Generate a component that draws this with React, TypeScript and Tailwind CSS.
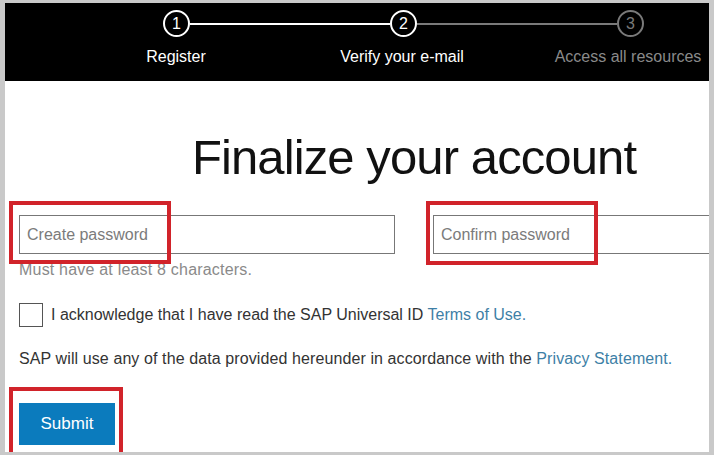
import React from "react";

const steps = [
  { n: "1", label: "Register", active: true },
  { n: "2", label: "Verify your e-mail", active: true },
  { n: "3", label: "Access all resources", active: false },
];

const Circle = ({ n, active }: { n: string; active: boolean }) => (
  <div
    className={`w-[27px] h-[27px] rounded-full border-2 flex items-center justify-center text-[16px] leading-none ${
      active ? "border-white text-white" : "border-[#7a7a7a] text-[#7a7a7a]"
    }`}
  >
    {n}
  </div>
);

export default function App() {
  return (
    <div
      className="w-[714px] h-[455px] bg-[#c9c9c9] pt-[3px] pb-[3px] pl-[5px] pr-[5px]"
      style={{ fontFamily: '"Liberation Sans", Arial, sans-serif' }}
    >
      <div className="w-full h-full bg-white flex flex-col overflow-hidden">
        {/* stepper */}
        <div className="h-[78px] shrink-0 bg-black pt-[7px]">
          <div className="flex items-center ml-[158px]">
            <Circle n="1" active />
            <div className="w-[200px] h-[2px] bg-white" />
            <Circle n="2" active />
            <div className="w-[200px] h-[2px] bg-[#7a7a7a]" />
            <Circle n="3" active={false} />
          </div>
          <div className="grid grid-cols-[226px_226px_226px] ml-[58px] mt-[10px]">
            {steps.map((s, i) => (
              <div
                key={i}
                className={`text-center text-[16px] leading-[20px] whitespace-nowrap ${
                  s.active ? "text-white" : "text-[#8a8a8a]"
                }`}
              >
                {s.label}
              </div>
            ))}
          </div>
        </div>

        <h1 className="mt-[52px] ml-[187px] h-[49px] text-[49px] leading-none tracking-[-0.9px] text-[#111] whitespace-nowrap">
          Finalize your account
        </h1>

        <div className="flex mt-[33px] ml-[14px] gap-[38px]">
          <div className="relative shrink-0">
            <div className="w-[376px] h-[39px] border border-[#777] flex items-center px-[7px] text-[16px] text-[#7b7b7b]">
              Create password
            </div>
            <div className="absolute left-[-10px] top-[-14px] w-[162px] h-[63px] border-4 border-[#d1232a]" />
          </div>
          <div className="relative shrink-0">
            <div className="w-[320px] h-[39px] border border-[#777] flex items-center px-[7px] text-[16px] text-[#7b7b7b]">
              Confirm password
            </div>
            <div className="absolute left-[-7px] top-[-14px] w-[172px] h-[64px] border-4 border-[#d1232a]" />
          </div>
        </div>

        <div className="ml-[14px] mt-[6px] text-[16px] leading-[20px] tracking-[0.2px] text-[#8a8a8a]">
          Must have at least 8 characters.
        </div>

        <div className="ml-[14px] mt-[23px] flex items-center gap-[8px]">
          <div className="w-[24px] h-[24px] border border-[#555] bg-white" />
          <div className="text-[16px] leading-[20px] text-[#333]">
            I acknowledge that I have read the SAP Universal ID{" "}
            <span className="text-[#3e7fa6]">Terms of Use.</span>
          </div>
        </div>

        <div className="ml-[14px] mt-[22px] text-[16px] leading-[20px] tracking-[0.1px] text-[#333] whitespace-nowrap">
          SAP will use any of the data provided hereunder in accordance with the{" "}
          <span className="text-[#3e7fa6]">Privacy Statement.</span>
        </div>

        <div className="relative ml-[14px] mt-[34px] w-[96px]">
          <button className="w-[96px] h-[42px] bg-[#0b7bbd] text-white text-[17px]">
            Submit
          </button>
          <div className="absolute left-[-10px] top-[-16px] w-[114px] h-[70px] border-4 border-[#d1232a]" />
        </div>
      </div>
    </div>
  );
}
